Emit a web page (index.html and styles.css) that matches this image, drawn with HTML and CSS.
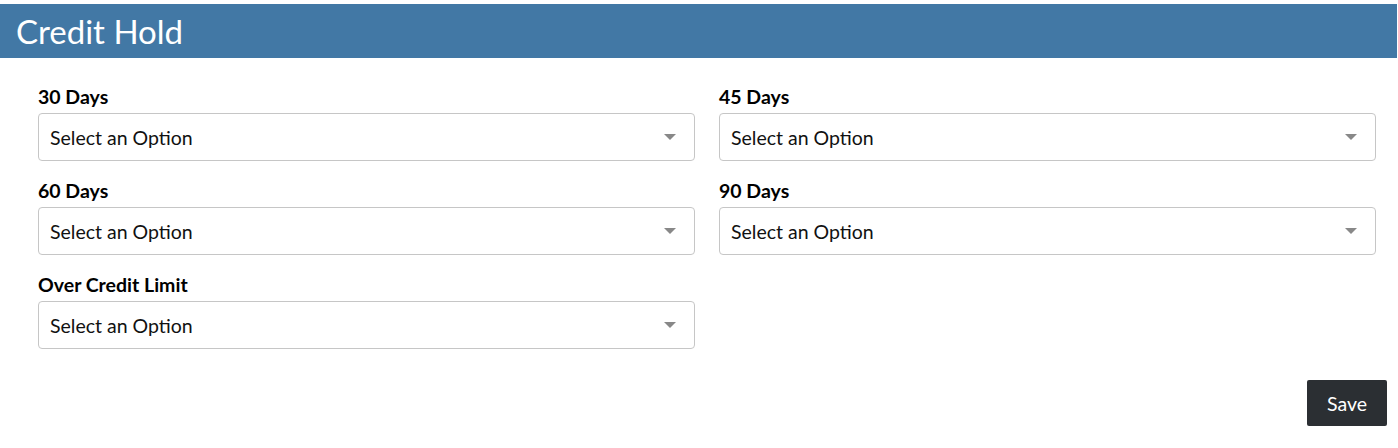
FILE: index.html
```html
<!DOCTYPE html>
<html>
<head>
<meta charset="utf-8">
<link rel="stylesheet" href="styles.css">
</head>
<body>
<div class="page">
  <div class="header"><h1 class="title">Credit Hold</h1></div>
  <div class="form">
    <div class="grid">
      <div class="field">
        <label class="label">30 Days</label>
        <div class="select"><span class="value">Select an Option</span><span class="caret"></span></div>
      </div>
      <div class="field">
        <label class="label">45 Days</label>
        <div class="select"><span class="value">Select an Option</span><span class="caret"></span></div>
      </div>
      <div class="field">
        <label class="label">60 Days</label>
        <div class="select"><span class="value">Select an Option</span><span class="caret"></span></div>
      </div>
      <div class="field">
        <label class="label">90 Days</label>
        <div class="select"><span class="value">Select an Option</span><span class="caret"></span></div>
      </div>
      <div class="field">
        <label class="label">Over Credit Limit</label>
        <div class="select"><span class="value">Select an Option</span><span class="caret"></span></div>
      </div>
    </div>
    <div class="actions"><button class="save">Save</button></div>
  </div>
</div>
</body>
</html>
```

FILE: styles.css
```css
html, body {
  margin: 0;
  padding: 0;
  background: #fff;
}
body {
  font-family: "Lato", "Liberation Sans", sans-serif;
  color: #000;
}
.page {
  padding-top: 4px;
}
.header {
  background: #4278a5;
  height: 54px;
  display: flex;
  align-items: center;
  padding-left: 16px;
  margin-right: 1px;
}
.title {
  margin: 0;
  font-weight: 400;
  font-size: 33px;
  color: #fff;
  line-height: 1;
}
.form {
  padding: 30px 11px 0 38px;
}
.grid {
  display: grid;
  grid-template-columns: 657px 657px;
  column-gap: 24px;
  row-gap: 21px;
}
.field {
  display: flex;
  flex-direction: column;
}
.label {
  font-weight: 700;
  font-size: 19.5px;
  line-height: 18px;
  margin-bottom: 7px;
}
.select {
  height: 48px;
  box-sizing: border-box;
  border: 1px solid #c6c6c6;
  border-radius: 4px;
  display: flex;
  align-items: center;
  justify-content: space-between;
  padding: 0 19px 0 11px;
}
.value {
  font-size: 19.5px;
  color: #111;
}
.caret {
  width: 0;
  height: 0;
  border-left: 6px solid transparent;
  border-right: 6px solid transparent;
  border-top: 6px solid #888;
  margin-right: -1px;
}
.actions {
  display: flex;
  justify-content: flex-end;
  margin-top: 31px;
}
.save {
  background: #2b2f33;
  color: #fff;
  border: none;
  border-radius: 2px;
  width: 80px;
  height: 46px;
  font-family: inherit;
  font-size: 19.5px;
  padding: 0;
}
```
